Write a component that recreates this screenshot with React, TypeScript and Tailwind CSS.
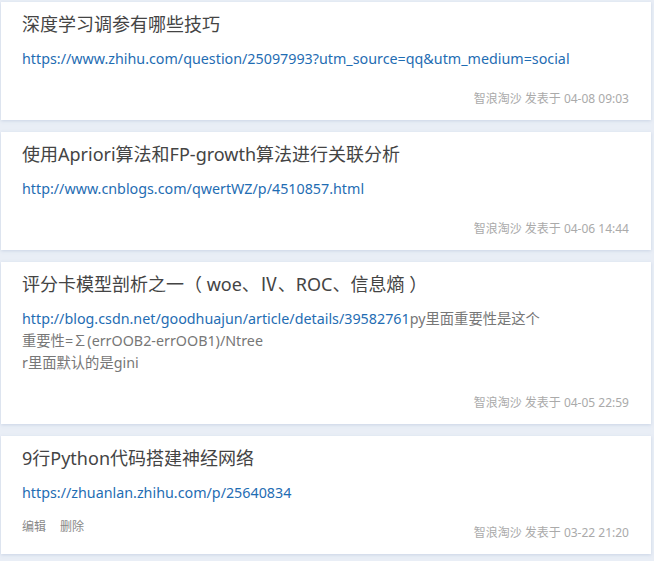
import React from 'react';

type Post = {
  title: string;
  url: string;
  extra?: string[];
  urlTail?: string;
  date: string;
  editable?: boolean;
};

const posts: Post[] = [
  {
    title: '深度学习调参有哪些技巧',
    url: 'https://www.zhihu.com/question/25097993?utm_source=qq&utm_medium=social',
    date: '04-08 09:03',
  },
  {
    title: '使用Apriori算法和FP-growth算法进行关联分析',
    url: 'http://www.cnblogs.com/qwertWZ/p/4510857.html',
    date: '04-06 14:44',
  },
  {
    title: '评分卡模型剖析之一（ woe、Ⅳ、ROC、信息熵 ）',
    url: 'http://blog.csdn.net/goodhuajun/article/details/39582761',
    urlTail: 'py里面重要性是这个',
    extra: ['重要性=∑(errOOB2-errOOB1)/Ntree', 'r里面默认的是gini'],
    date: '04-05 22:59',
  },
  {
    title: '9行Python代码搭建神经网络',
    url: 'https://zhuanlan.zhihu.com/p/25640834',
    date: '03-22 21:20',
    editable: true,
  },
];

const PostCard: React.FC<{ post: Post }> = ({ post }) => (
  <div className="bg-white shadow-[0_1px_3px_rgba(150,170,200,0.35)] pl-[21px] pr-[22px] pt-[9px] pb-[11px]">
    <h3 className="text-[18px] leading-[26px] text-[#444]">{post.title}</h3>
    <div className="mt-[11px] text-[14.3px] leading-[22px] text-[#777]">
      <div>
        <a className="text-[#1f6db3]">{post.url}</a>
        {post.urlTail}
      </div>
      {post.extra?.map((line) => (
        <div key={line}>{line}</div>
      ))}
    </div>
    <div className="mt-[19px] flex items-end justify-between text-[12px] leading-[20px]">
      <div className="flex gap-[14px] text-[#888] relative -top-[6px]">
        {post.editable && (
          <>
            <span>编辑</span>
            <span>删除</span>
          </>
        )}
      </div>
      <div className="text-[#aaa]">智浪淘沙 发表于 {post.date}</div>
    </div>
  </div>
);

export default function App() {
  return (
    <div
      className="min-h-[561px] w-[654px] bg-[#e9eef6] pl-[1px] pr-[3px] pt-[2px] flex flex-col gap-[12px]"
      style={{ fontFamily: '"Noto Sans", "Noto Sans CJK SC", sans-serif' }}
    >
      {posts.map((p) => (
        <PostCard key={p.title} post={p} />
      ))}
    </div>
  );
}
